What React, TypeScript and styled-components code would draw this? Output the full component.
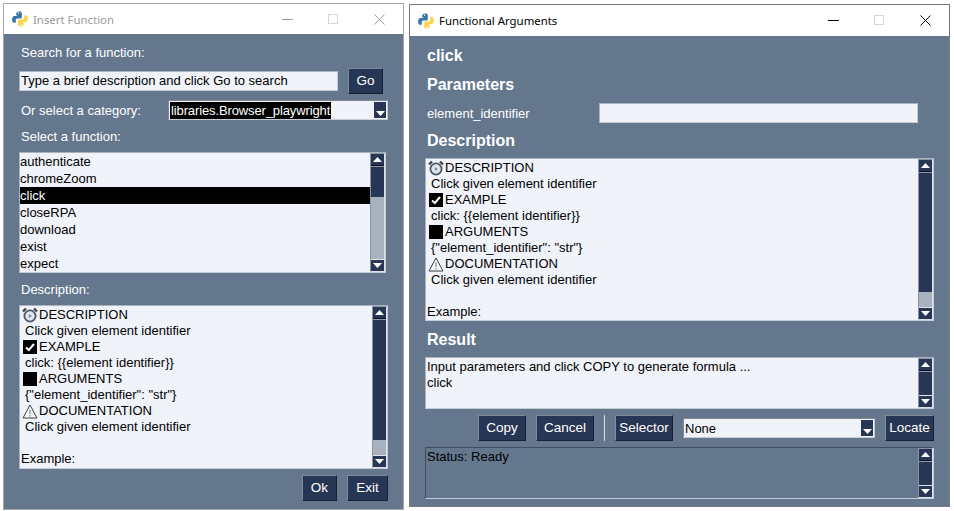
import React from 'react';
import styled, { createGlobalStyle } from 'styled-components';

const NAVY = '#283655';
const SLATE = '#64778d';
const PAPER = '#f0f3f9';

const GlobalStyle = createGlobalStyle`
	html, body {
		margin: 0;
		padding: 0;
		background: #ffffff;
		font-family: 'Liberation Sans', Arial, sans-serif;
		font-size: 13px;
	}
`;

const Desktop = styled.div`
	display: flex;
	align-items: flex-start;
	width: 954px;
	height: 511px;
	padding: 3px 0 0 3px;
	box-sizing: border-box;
	overflow: hidden;
`;

const Window = styled.div<{ $w: number; $h: number; $top?: number; $left?: number; $border: string }>`
	display: flex;
	flex-direction: column;
	box-sizing: border-box;
	width: ${(p) => p.$w}px;
	height: ${(p) => p.$h}px;
	margin-top: ${(p) => p.$top ?? 0}px;
	margin-left: ${(p) => p.$left ?? 0}px;
	border: 1px solid ${(p) => p.$border};
	background: ${SLATE};
`;

const TitleBar = styled.div<{ $h: number; $inactive?: boolean }>`
	display: flex;
	align-items: center;
	flex: none;
	height: ${(p) => p.$h}px;
	padding-left: 8px;
	background: #ffffff;
	color: ${(p) => (p.$inactive ? '#9a9a9a' : '#000000')};
	font-family: 'Noto Sans', 'Liberation Sans', sans-serif;
	font-size: 11.4px;
`;

const TitleText = styled.span`
	margin-left: 5px;
	flex: 1;
`;

const Caption = styled.div`
	display: flex;
	width: 138px;
	flex: none;
	padding-right: 1px;
`;

const CaptionBtn = styled.div`
	display: flex;
	align-items: center;
	justify-content: center;
	width: 46px;
	height: 30px;
`;

const Body = styled.div<{ $pad: string; $gap: number }>`
	display: flex;
	flex-direction: column;
	flex: 1;
	gap: ${(p) => p.$gap}px;
	padding: ${(p) => p.$pad};
	color: #ffffff;
`;

const Label = styled.div<{ $w?: number }>`
	flex: none;
	width: ${(p) => (p.$w ? `${p.$w}px` : 'auto')};
	box-sizing: border-box;
	height: 20px;
	line-height: 21px;
	padding-left: 2px;
	white-space: nowrap;
`;

const Heading = styled.div<{ $mb: number; $mt?: number }>`
	height: 20px;
	line-height: 21px;
	padding-left: 2px;
	margin-top: ${(p) => p.$mt ?? 0}px;
	margin-bottom: ${(p) => p.$mb}px;
	font-size: 16px;
	font-weight: bold;
`;

const Row = styled.div<{ $h: number; $mb?: number }>`
	display: flex;
	align-items: center;
	height: ${(p) => p.$h}px;
	margin-bottom: ${(p) => p.$mb ?? 0}px;
`;

const ButtonRow = styled(Row)<{ $mt?: number }>`
	justify-content: flex-end;
	margin-top: ${(p) => p.$mt ?? 0}px;
`;

const TextInput = styled.div<{ $w: number }>`
	box-sizing: border-box;
	width: ${(p) => p.$w}px;
	height: 20px;
	padding-left: 1px;
	line-height: 18px;
	background: ${PAPER};
	border: 1px solid #c4ccd6;
	border-top-color: #a9b2bd;
	border-left-color: #a9b2bd;
	color: #000000;
	white-space: nowrap;
`;

const Button = styled.div<{ $w: number; $ml?: number }>`
	box-sizing: border-box;
	flex: none;
	width: ${(p) => p.$w}px;
	height: 26px;
	margin-left: ${(p) => p.$ml ?? 0}px;
	line-height: 24px;
	font-size: 13.5px;
	text-align: center;
	color: #ffffff;
	background: ${NAVY};
	border: 1px solid;
	border-color: #7d8a9c #16203a #16203a #7d8a9c;
`;

const Combo = styled.div<{ $w: number; $ml?: number }>`
	display: flex;
	box-sizing: border-box;
	width: ${(p) => p.$w}px;
	height: 20px;
	margin-left: ${(p) => p.$ml ?? 0}px;
	padding: 1px;
	background: ${PAPER};
	border: 1px solid #c4ccd6;
	border-top-color: #7f8893;
	border-left-color: #7f8893;
	color: #000000;
`;

const ComboValue = styled.div`
	flex: 1;
	min-width: 0;
	line-height: 17px;
`;

const Selected = styled.span`
	display: inline-block;
	padding: 0 1px;
	letter-spacing: -0.12px;
	background: #000000;
	color: #ffffff;
`;

const ComboArrow = styled.div`
	display: flex;
	align-items: flex-end;
	justify-content: center;
	flex: none;
	width: 12px;
	padding-bottom: 2px;
	box-sizing: border-box;
	background: ${NAVY};
`;

const Box = styled.div<{ $h: number; $w?: number; $dark?: boolean }>`
	display: flex;
	box-sizing: border-box;
	width: ${(p) => (p.$w ? `${p.$w}px` : '100%')};
	height: ${(p) => p.$h}px;
	background: ${(p) => (p.$dark ? SLATE : PAPER)};
	border: 1px solid #c4ccd6;
	border-top-color: ${(p) => (p.$dark ? '#3f4d60' : '#a9b2bd')};
	border-left-color: ${(p) => (p.$dark ? '#3f4d60' : '#a9b2bd')};
	color: #000000;
`;

const Content = styled.div<{ $pt?: number }>`
	flex: 1;
	min-width: 0;
	padding-top: ${(p) => p.$pt ?? 0}px;
	overflow: hidden;
`;

const ListItem = styled.div<{ $active?: boolean }>`
	height: 17px;
	line-height: 17px;
	background: ${(p) => (p.$active ? '#000000' : 'transparent')};
	color: ${(p) => (p.$active ? '#ffffff' : '#000000')};
`;

const Line = styled.div<{ $indent?: number }>`
	display: flex;
	align-items: center;
	height: 16px;
	line-height: 16px;
	padding-left: ${(p) => p.$indent ?? 0}px;
	white-space: pre;
`;

const Glyph = styled.svg`
	flex: none;
	width: 16px;
	height: 16px;
	margin-right: 1px;
`;

const Scroll = styled.div`
	display: flex;
	flex-direction: column;
	flex: none;
	box-sizing: border-box;
	width: 15px;
	background: #a8b2bf;
	border: 1px solid #dfe3e9;
	border-top-color: #8a95a3;
	border-left-color: #8a95a3;
`;

const ScrollBtn = styled.div<{ $down?: boolean }>`
	display: flex;
	align-items: center;
	justify-content: center;
	flex: none;
	height: 11px;
	background: ${NAVY};
	border-bottom: ${(p) => (p.$down ? 'none' : '1px solid #0b1224')};
	border-top: ${(p) => (p.$down ? '1px solid #dfe3e9' : 'none')};
`;

const Thumb = styled.div<{ $h?: number }>`
	flex: ${(p) => (p.$h ? `0 0 ${p.$h}px` : '1')};
	box-sizing: border-box;
	background: ${NAVY};
	border-top: 1px solid #8f9aa9;
`;

const Track = styled.div`
	flex: 1;
`;

const Divider = styled.div`
	width: 1px;
	height: 26px;
	margin: 0 10px;
	background: #d8dde4;
`;

const Arrow = ({ down }: { down?: boolean }) => (
	<svg width={9} height={5} viewBox="0 0 9 5">
		<path d={down ? 'M0 0H9L4.5 5Z' : 'M0 5H9L4.5 0Z'} fill="#ffffff" />
	</svg>
);

const Scrollbar = ({ thumb }: { thumb?: number }) => (
	<Scroll>
		<ScrollBtn>
			<Arrow />
		</ScrollBtn>
		<Thumb $h={thumb} />
		{thumb && <Track />}
		<ScrollBtn $down>
			<Arrow down />
		</ScrollBtn>
	</Scroll>
);

const PythonLogo = () => (
	<svg width="16" height="16" viewBox="0 0 16 16">
		<path
			d="M5 1.5C5.6.6 7 .3 8.2.5 9.3.7 9.8 1.4 9.8 2.4V6c0 .9-.7 1.6-1.6 1.6H5.4c-.9 0-1.6.7-1.6 1.6v2.6H2.4C1 11.8.2 10.6.1 8.7 0 6.8.9 5 2.4 5H5.6V4.4H4.2V2.6C4.2 2.1 4.6 1.8 5 1.5Z"
			fill="#3a75a8"
		/>
		<path
			d="M11 14.5c-.6.9-2 1.2-3.2 1-1.1-.2-1.6-.9-1.6-1.9V10c0-.9.7-1.6 1.6-1.6h2.8c.9 0 1.6-.7 1.6-1.6V4.2h1.4c1.4 0 2.2 1.2 2.3 3.1.1 1.9-.8 3.7-2.3 3.7H10.4v.6h1.4v1.8c0 .5-.4.8-.8 1.1Z"
			fill="#fdd54a"
		/>
		<circle cx="6.6" cy="2.3" r=".7" fill="#ffffff" />
		<circle cx="9.4" cy="13.7" r=".7" fill="#ffffff" />
	</svg>
);

const Minimize = ({ color }: { color: string }) => (
	<svg width="11" height="11" viewBox="0 0 11 11">
		<path d="M0 5.5H11" stroke={color} />
	</svg>
);

const Maximize = () => (
	<svg width="11" height="11" viewBox="0 0 11 11">
		<rect x=".5" y=".5" width="9" height="9" fill="none" stroke="#d6d6d6" />
	</svg>
);

const Close = ({ color }: { color: string }) => (
	<svg width="11" height="11" viewBox="0 0 11 11">
		<path d="M.5.5L10.5 10.5M10.5.5L.5 10.5" stroke={color} />
	</svg>
);

const ClockGlyph = () => (
	<Glyph viewBox="0 0 16 16">
		<circle cx="8" cy="9" r="5.6" fill="#dfe6ee" stroke="#4d5863" strokeWidth="1.8" />
		<path d="M1 4.5L4 1.5M15 4.5L12 1.5" stroke="#3d4650" strokeWidth="2.4" />
		<path d="M6.8 7v4L10 9Z" fill="#7d8a99" />
	</Glyph>
);

const CheckGlyph = () => (
	<Glyph viewBox="0 0 16 16">
		<rect x="1" y="1" width="14" height="14" fill="#000000" />
		<path d="M4 8.5L6.8 11L12 5" fill="none" stroke="#ffffff" strokeWidth="2" />
	</Glyph>
);

const SquareGlyph = () => (
	<Glyph viewBox="0 0 16 16">
		<rect x="1" y="1" width="14" height="14" fill="#000000" />
	</Glyph>
);

const WarnGlyph = () => (
	<Glyph viewBox="0 0 16 16">
		<path d="M8 2L15 15H1Z" fill="#f7f8fa" stroke="#3d3d3d" />
		<path d="M8 6.5V11M8 12V13.5" stroke="#8d96a0" strokeWidth="1.4" />
	</Glyph>
);

const DescriptionText = () => (
	<Content $pt={1}>
		<Line $indent={2}>
			<ClockGlyph />
			DESCRIPTION
		</Line>
		<Line $indent={5}>Click given element identifier</Line>
		<Line $indent={2}>
			<CheckGlyph />
			EXAMPLE
		</Line>
		<Line $indent={5}>{'click: {{element identifier}}'}</Line>
		<Line $indent={2}>
			<SquareGlyph />
			ARGUMENTS
		</Line>
		<Line $indent={5}>{'{"element_identifier": "str"}'}</Line>
		<Line $indent={2}>
			<WarnGlyph />
			DOCUMENTATION
		</Line>
		<Line $indent={5}>Click given element identifier</Line>
		<Line />
		<Line $indent={1}>Example:</Line>
	</Content>
);

const functions = ['authenticate', 'chromeZoom', 'click', 'closeRPA', 'download', 'exist', 'expect'];

const WindowControls = ({ color }: { color: string }) => (
	<Caption>
		<CaptionBtn>
			<Minimize color={color} />
		</CaptionBtn>
		<CaptionBtn>
			<Maximize />
		</CaptionBtn>
		<CaptionBtn>
			<Close color={color} />
		</CaptionBtn>
	</Caption>
);

const InsertFunction = () => (
	<Window $w={401} $h={507} $border="#a6a6a6">
		<TitleBar $h={30} $inactive>
			<PythonLogo />
			<TitleText>Insert Function</TitleText>
			<WindowControls color="#9a9a9a" />
		</TitleBar>
		<Body $pad="8px 15px 0 15px" $gap={6}>
			<Label>Search for a function:</Label>
			<Row $h={26}>
				<TextInput $w={319}>Type a brief description and click Go to search</TextInput>
				<Button $w={35} $ml={10}>
					Go
				</Button>
			</Row>
			<Row $h={20}>
				<Label $w={149}>Or select a category:</Label>
				<Combo $w={220}>
					<ComboValue>
						<Selected>libraries.Browser_playwright</Selected>
					</ComboValue>
					<ComboArrow>
						<Arrow down />
					</ComboArrow>
				</Combo>
			</Row>
			<Label>Select a function:</Label>
			<Box $h={121} $w={367}>
				<Content>
					{functions.map((f) => (
						<ListItem key={f} $active={f === 'click'}>
							{f}
						</ListItem>
					))}
				</Content>
				<Scrollbar thumb={31} />
			</Box>
			<Label>Description:</Label>
			<Box $h={164}>
				<DescriptionText />
				<Scrollbar thumb={121} />
			</Box>
			<ButtonRow $h={26}>
				<Button $w={35}>Ok</Button>
				<Button $w={41} $ml={10}>
					Exit
				</Button>
			</ButtonRow>
		</Body>
	</Window>
);

const FunctionalArguments = () => (
	<Window $w={541} $h={503} $top={1} $left={5} $border="#7a7a7a">
		<TitleBar $h={31}>
			<PythonLogo />
			<TitleText>Functional Arguments</TitleText>
			<WindowControls color="#000000" />
		</TitleBar>
		<Body $pad="9px 15px 0 15px" $gap={0}>
			<Heading $mb={9}>click</Heading>
			<Heading $mb={9}>Parameters</Heading>
			<Row $h={20} $mb={7}>
				<Label $w={174}>element_identifier</Label>
				<TextInput $w={319} />
			</Row>
			<Heading $mb={8}>Description</Heading>
			<Box $h={163}>
				<DescriptionText />
				<Scrollbar thumb={120} />
			</Box>
			<Heading $mt={8} $mb={8}>
				Result
			</Heading>
			<Box $h={52}>
				<Content $pt={1}>
					<Line $indent={1}>Input parameters and click COPY to generate formula ...</Line>
					<Line $indent={1}>click</Line>
				</Content>
				<Scrollbar />
			</Box>
			<ButtonRow $h={26} $mt={6} $mb={6}>
				<Button $w={48}>Copy</Button>
				<Button $w={58} $ml={10}>
					Cancel
				</Button>
				<Divider />
				<Button $w={58}>Selector</Button>
				<Combo $w={192} $ml={10}>
					<ComboValue>None</ComboValue>
					<ComboArrow>
						<Arrow down />
					</ComboArrow>
				</Combo>
				<Button $w={49} $ml={10}>
					Locate
				</Button>
			</ButtonRow>
			<Box $h={52} $dark>
				<Content $pt={1}>
					<Line $indent={1}>Status: Ready</Line>
				</Content>
				<Scrollbar />
			</Box>
		</Body>
	</Window>
);

const App: React.FC = () => (
	<>
		<GlobalStyle />
		<Desktop>
			<InsertFunction />
			<FunctionalArguments />
		</Desktop>
	</>
);

export default App;
